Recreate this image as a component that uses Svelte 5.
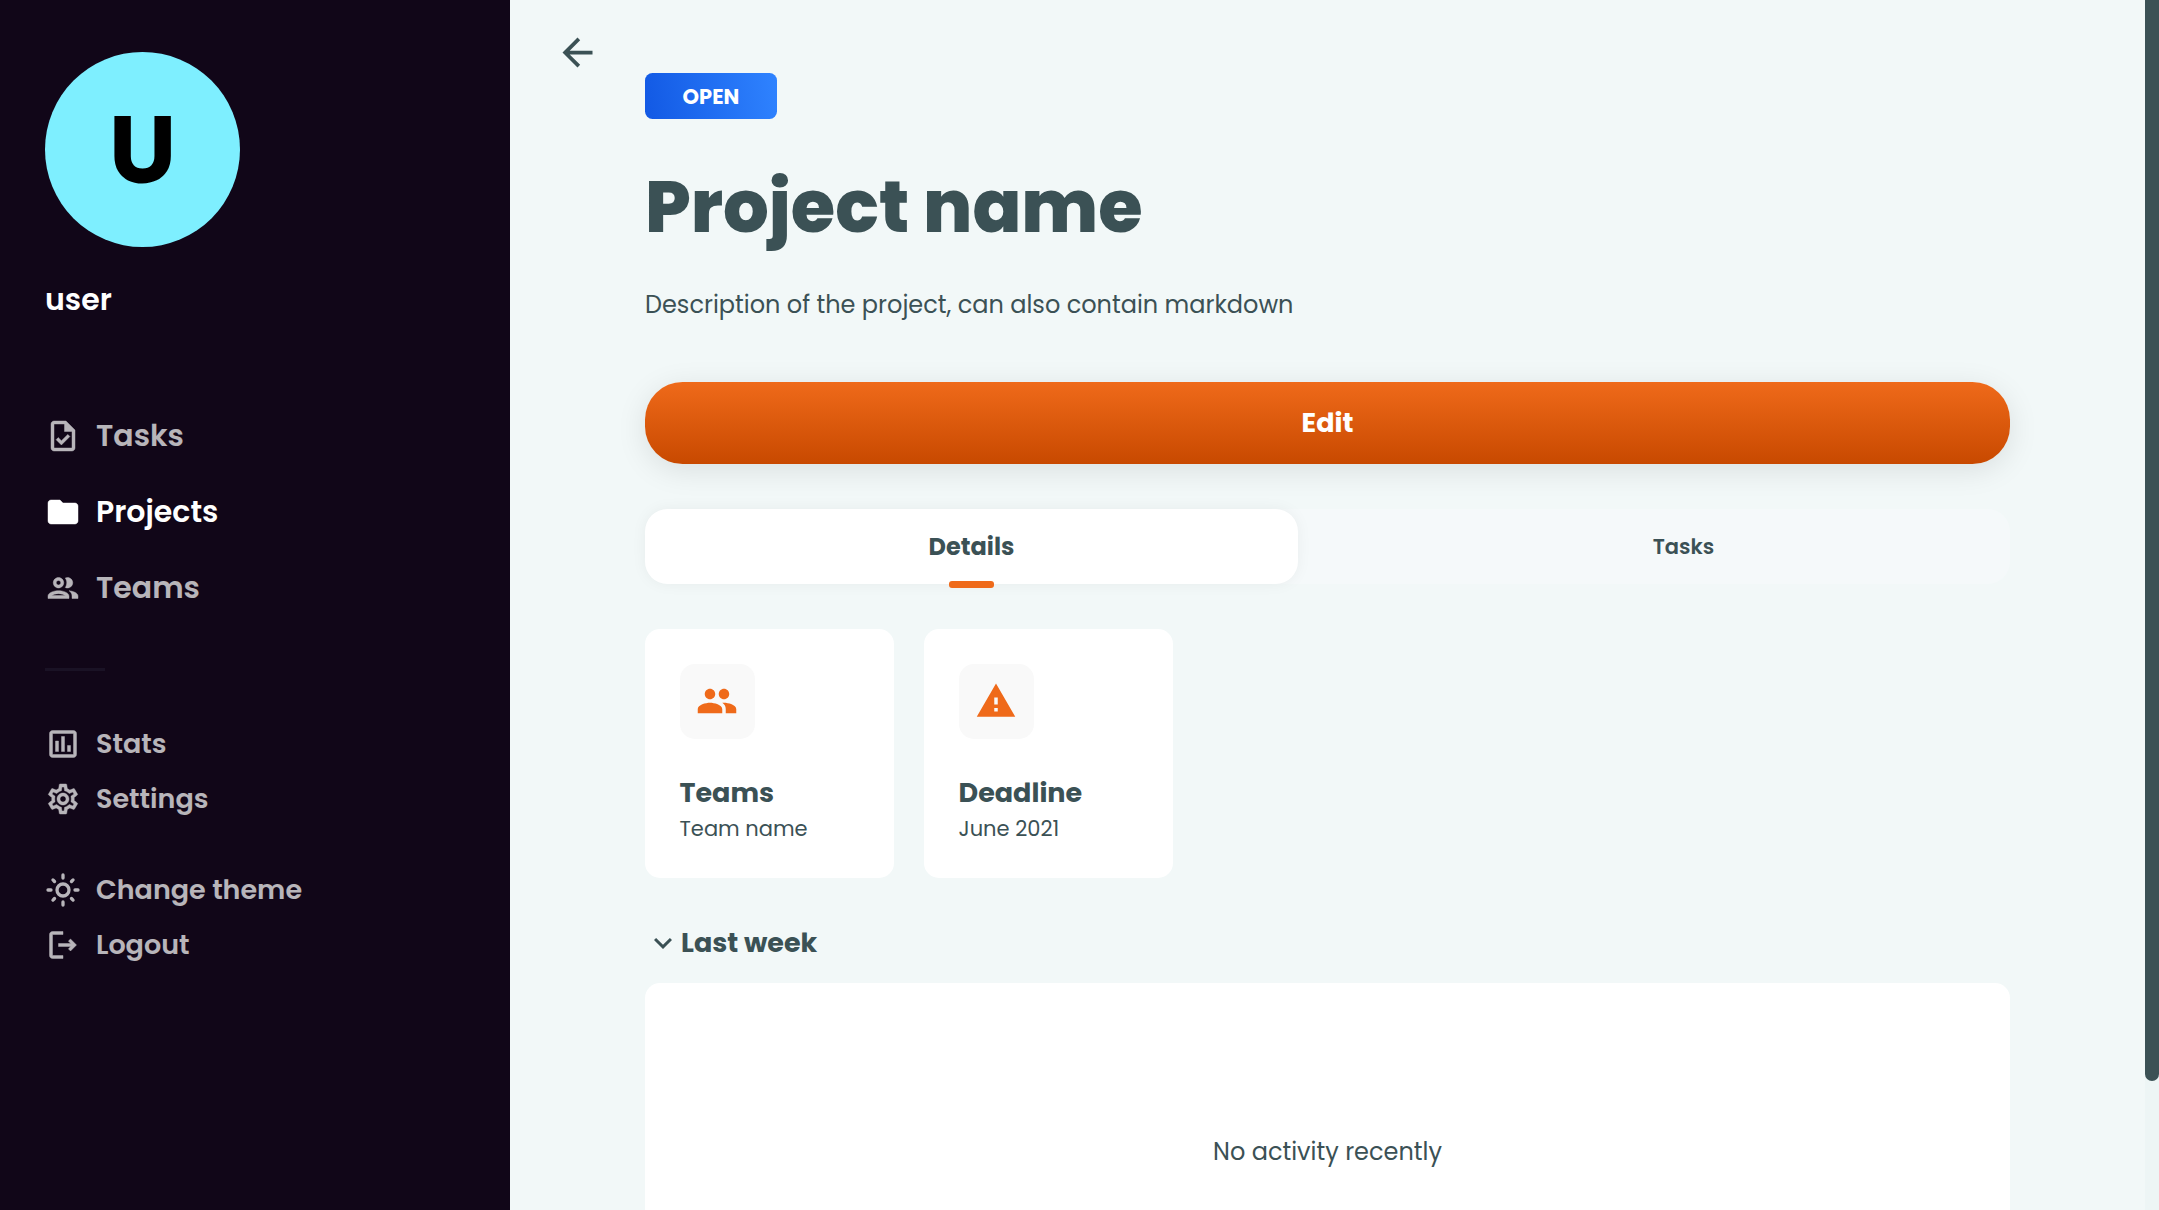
<script>
  const paths = {
    task: 'M14 2H6c-1.1 0-1.99.9-1.99 2L4 20c0 1.1.89 2 1.99 2H18c1.1 0 2-.9 2-2V8l-6-6zm4 18H6V4h7v5h5v11zm-9.18-6.95L7.4 14.46 10.94 18l5.66-5.66-1.41-1.41-4.24 4.24-2.13-2.12z',
    folder: 'M10 4H4c-1.1 0-1.99.9-1.99 2L2 18c0 1.1.9 2 2 2h16c1.1 0 2-.9 2-2V8c0-1.1-.9-2-2-2h-8l-2-2z',
    groupOutline:
      'M9 13.75c-2.34 0-7 1.17-7 3.5V19h14v-1.75c0-2.33-4.66-3.5-7-3.5zM4.34 17c.84-.58 2.87-1.25 4.66-1.25s3.82.67 4.66 1.25H4.34zM9 12c1.93 0 3.5-1.57 3.5-3.5S10.93 5 9 5 5.5 6.57 5.5 8.5 7.07 12 9 12zm0-5c.83 0 1.5.67 1.5 1.5S9.83 10 9 10s-1.5-.67-1.5-1.5S8.17 7 9 7zm7.04 6.81c1.16.84 1.96 1.96 1.96 3.44V19h4v-1.75c0-2.02-3.5-3.17-5.96-3.44zM15 12c1.93 0 3.5-1.57 3.5-3.5S16.93 5 15 5c-.54 0-1.04.13-1.5.35.63.89 1 1.98 1 3.15s-.37 2.26-1 3.15c.46.22.96.35 1.5.35z',
    stats:
      'M19 3H5c-1.1 0-2 .9-2 2v14c0 1.1.9 2 2 2h14c1.1 0 2-.9 2-2V5c0-1.1-.9-2-2-2zm0 16H5V5h14v14zM7 10h2v7H7zm4-3h2v10h-2zm4 6h2v4h-2z',
    settings:
      'M19.43 12.98c.04-.32.07-.64.07-.98s-.03-.66-.07-.98l2.11-1.65c.19-.15.24-.42.12-.64l-2-3.46c-.09-.16-.26-.25-.44-.25-.06 0-.12.01-.17.03l-2.49 1c-.52-.4-1.08-.73-1.69-.98l-.38-2.65C14.46 2.18 14.25 2 14 2h-4c-.25 0-.46.18-.49.42l-.38 2.65c-.61.25-1.17.59-1.69.98l-2.49-1c-.06-.02-.12-.03-.18-.03-.17 0-.34.09-.43.25l-2 3.46c-.13.22-.07.49.12.64l2.11 1.65c-.04.32-.07.65-.07.98s.03.66.07.98l-2.11 1.65c-.19.15-.24.42-.12.64l2 3.46c.09.16.26.25.44.25.06 0 .12-.01.17-.03l2.49-1c.52.4 1.08.73 1.69.98l.38 2.65c.03.24.24.42.49.42h4c.25 0 .46-.18.49-.42l.38-2.65c.61-.25 1.17-.59 1.69-.98l2.49 1c.06.02.12.03.18.03.17 0 .34-.09.43-.25l2-3.46c.12-.22.07-.49-.12-.64l-2.11-1.65zm-1.98-1.71c.04.31.05.52.05.73 0 .21-.02.43-.05.73l-.14 1.13.89.7 1.08.84-.7 1.21-1.27-.51-1.04-.42-.9.68c-.43.32-.84.56-1.25.73l-1.06.43-.16 1.13-.2 1.35h-1.4l-.19-1.35-.16-1.13-1.06-.43c-.43-.18-.83-.41-1.23-.71l-.91-.7-1.06.43-1.27.51-.7-1.21 1.08-.84.89-.7-.14-1.13c-.03-.31-.05-.54-.05-.74s.02-.43.05-.73l.14-1.13-.89-.7-1.08-.84.7-1.21 1.27.51 1.04.42.9-.68c.43-.32.84-.56 1.25-.73l1.06-.43.16-1.13.2-1.35h1.39l.19 1.35.16 1.13 1.06.43c.43.18.83.41 1.23.71l.91.7 1.06-.43 1.27-.51.7 1.21-1.07.85-.89.7.14 1.13zM12 8c-2.21 0-4 1.79-4 4s1.79 4 4 4 4-1.79 4-4-1.79-4-4-4zm0 6c-1.1 0-2-.9-2-2s.9-2 2-2 2 .9 2 2-.9 2-2 2z',
    logout:
      'M17 8l-1.41 1.41L17.17 11H9v2h8.17l-1.58 1.58L17 16l4-4-4-4zM5 5h7V3H5c-1.1 0-2 .9-2 2v14c0 1.1.9 2 2 2h7v-2H5V5z',
    back: 'M20 11H7.83l5.59-5.59L12 4l-8 8 8 8 1.41-1.41L7.83 13H20v-2z',
    group:
      'M16 11c1.66 0 2.99-1.34 2.99-3S17.66 5 16 5c-1.66 0-3 1.34-3 3s1.34 3 3 3zm-8 0c1.66 0 2.99-1.34 2.99-3S9.66 5 8 5C6.34 5 5 6.34 5 8s1.34 3 3 3zm0 2c-2.33 0-7 1.17-7 3.5V19h14v-2.5c0-2.33-4.67-3.5-7-3.5zm8 0c-.29 0-.62.02-.97.05 1.16.84 1.97 1.97 1.97 3.45V19h6v-2.5c0-2.33-4.67-3.5-7-3.5z',
    warning: 'M1 21h22L12 2 1 21zm12-3h-2v-2h2v2zm0-4h-2v-4h2v4z',
    chevron: 'M16.59 8.59L12 13.17 7.41 8.59 6 10l6 6 6-6z'
  };

  const pages = [
    { label: 'Tasks', icon: 'task' },
    { label: 'Projects', icon: 'folder' },
    { label: 'Teams', icon: 'groupOutline' }
  ];
  const tools = [
    { label: 'Stats', icon: 'stats' },
    { label: 'Settings', icon: 'settings' }
  ];
  const actions = [
    { label: 'Change theme', icon: 'sun' },
    { label: 'Logout', icon: 'logout' }
  ];
  const facts = [
    { title: 'Teams', value: 'Team name', icon: 'group' },
    { title: 'Deadline', value: 'June 2021', icon: 'warning' }
  ];

  let page = $state('Projects');
  let tab = $state('Details');
</script>

{#snippet icon(name)}
  <svg class="icon" viewBox="0 0 24 24" aria-hidden="true">
    {#if name === 'sun'}
      <g class="rays">
        <circle cx="12" cy="12" r="4" />
        <path d="M12 2v2M12 20v2M2 12h2M20 12h2M5.3 5.3l1.05 1.05M17.65 17.65l1.05 1.05M5.3 18.7l1.05-1.05M17.65 6.35l1.05-1.05" />
      </g>
    {:else}
      <path class="shape" d={paths[name]} />
    {/if}
  </svg>
{/snippet}

<div class="app">
  <aside class="sidebar">
    <div class="avatar">U</div>
    <div class="username">user</div>
    <nav class="pages">
      {#each pages as item}
        <button class="link big" class:active={page === item.label} onclick={() => (page = item.label)}>
          {@render icon(item.icon)}<span>{item.label}</span>
        </button>
      {/each}
    </nav>
    <div class="divider"></div>
    <div class="group">
      {#each tools as item}
        <button class="link">{@render icon(item.icon)}<span>{item.label}</span></button>
      {/each}
    </div>
    <div class="group">
      {#each actions as item}
        <button class="link">{@render icon(item.icon)}<span>{item.label}</span></button>
      {/each}
    </div>
  </aside>

  <main class="main">
    <div class="back">
      <button aria-label="Back">{@render icon('back')}</button>
    </div>
    <div class="content">
      <div class="badge">OPEN</div>
      <h1>Project name</h1>
      <p class="description">Description of the project, can also contain markdown</p>
      <button class="edit">Edit</button>
      <div class="tabs">
        {#each ['Details', 'Tasks'] as name}
          <button class="tab" class:selected={tab === name} onclick={() => (tab = name)}>{name}</button>
        {/each}
      </div>
      <div class="cards">
        {#each facts as fact}
          <section class="card">
            <div class="card-icon">{@render icon(fact.icon)}</div>
            <h2>{fact.title}</h2>
            <p>{fact.value}</p>
          </section>
        {/each}
      </div>
      <div class="section-title">{@render icon('chevron')}<h2>Last week</h2></div>
      <div class="activity">No activity recently</div>
    </div>
    <div class="scrollbar"><div class="thumb"></div></div>
  </main>
</div>

<style>
  :global(body) {
    margin: 0;
    overflow: hidden;
  }
  .app {
    display: flex;
    height: 100vh;
    overflow: hidden;
    background: #f2f8f8;
    color: #3b5155;
    font-family: Poppins, Inter, sans-serif;
  }
  button {
    display: flex;
    align-items: center;
    margin: 0;
    padding: 0;
    border: 0;
    background: none;
    color: inherit;
    font: inherit;
    cursor: pointer;
  }
  h1, h2, p {
    margin: 0;
  }
  .icon {
    display: block;
    flex: none;
    width: 36px;
    height: 36px;
  }
  .shape {
    fill: currentColor;
  }
  .rays {
    fill: none;
    stroke: currentColor;
    stroke-width: 2.2;
    stroke-linecap: round;
  }

  .sidebar {
    flex: none;
    box-sizing: border-box;
    width: 510px;
    padding: 52px 45px 0;
    background: #110618;
    color: #fff;
  }
  .avatar {
    display: flex;
    align-items: center;
    justify-content: center;
    width: 195px;
    height: 195px;
    border-radius: 50%;
    background: #7eefff;
    color: #000;
    font-size: 96px;
    font-weight: 700;
  }
  .username {
    margin-top: 30px;
    font-size: 30px;
    font-weight: 600;
    line-height: 45px;
  }
  .pages {
    margin-top: 76px;
  }
  .link {
    height: 55px;
    gap: 15px;
    font-size: 27px;
    font-weight: 600;
    opacity: 0.7;
  }
  .link .icon {
    overflow: visible;
  }
  .link .shape {
    stroke: currentColor;
    stroke-width: 0.3;
  }
  .link.big {
    height: 76px;
    font-size: 30px;
  }
  .link.active {
    opacity: 1;
  }
  .divider {
    width: 60px;
    height: 3px;
    margin: 42px 0 45.5px;
    background: #1a1225;
  }
  .group + .group {
    margin-top: 36px;
  }

  .main {
    display: flex;
    flex: 1;
    min-width: 0;
  }
  .back {
    flex: none;
    box-sizing: border-box;
    width: 135px;
    padding: 30px 0 0 45px;
  }
  .back .icon {
    width: 45px;
    height: 45px;
  }
  .content {
    flex: none;
    width: 1365px;
    padding-top: 73px;
  }
  .badge {
    box-sizing: border-box;
    width: 132px;
    height: 46px;
    padding-top: 1px;
    border-radius: 7.5px;
    background: linear-gradient(80deg, #1259e4, #2f83ff);
    color: #fff;
    font-size: 21px;
    font-weight: 700;
    line-height: 46px;
    text-align: center;
  }
  h1 {
    margin-top: 34px;
    font-size: 72px;
    font-weight: 800;
    line-height: 108px;
  }
  .description {
    margin-top: 26px;
    font-size: 24px;
    line-height: 36px;
  }
  .edit {
    justify-content: center;
    width: 100%;
    height: 82px;
    margin-top: 59px;
    border-radius: 37.5px;
    background: linear-gradient(#ef6a1a, #c84900);
    box-shadow: 0 6px 30px rgba(0, 0, 0, 0.1);
    color: #fff;
    font-size: 27px;
    font-weight: 700;
  }
  .tabs {
    display: flex;
    justify-content: space-between;
    height: 75px;
    margin-top: 45px;
    border-radius: 22.5px;
    background: #f5f9fa;
  }
  .tab {
    position: relative;
    justify-content: center;
    width: 653px;
    border-radius: 22.5px;
    font-size: 21px;
    font-weight: 600;
  }
  .tab.selected {
    background: #fff;
    box-shadow: 0 0 15px rgba(0, 0, 0, 0.05);
    font-size: 24px;
    font-weight: 700;
  }
  .tab.selected::after {
    content: '';
    position: absolute;
    bottom: -4px;
    left: calc(50% - 23px);
    width: 45px;
    height: 7.5px;
    border-radius: 3px;
    background: #ef6a1a;
  }
  .cards {
    display: flex;
    gap: 30px;
    margin-top: 45px;
  }
  .card {
    box-sizing: border-box;
    width: 249px;
    height: 249px;
    padding: 35px 34.5px;
    border-radius: 15px;
    background: #fff;
  }
  .card-icon {
    display: flex;
    align-items: center;
    justify-content: center;
    box-sizing: border-box;
    width: 75px;
    height: 75px;
    padding-bottom: 1.5px;
    border-radius: 15px;
    background: #f9f9f9;
    color: #ef6a1a;
  }
  .card-icon .icon {
    width: 42px;
    height: 42px;
  }
  h2 {
    font-size: 27px;
    font-weight: 700;
    line-height: 40px;
  }
  .card h2 {
    margin-top: 33.5px;
  }
  .card p {
    font-size: 21px;
    line-height: 32px;
  }
  .section-title {
    display: flex;
    align-items: center;
    margin-top: 44.5px;
  }
  .activity {
    display: flex;
    align-items: center;
    justify-content: center;
    height: 337px;
    margin-top: 20.5px;
    border-radius: 15px;
    background: #fff;
    font-size: 24px;
  }
  .scrollbar {
    flex: none;
    width: 14px;
    height: 100%;
    margin-left: auto;
    background: #edf5f5;
  }
  .thumb {
    height: 1081px;
    border-radius: 0 0 7px 7px;
    background: #3b5155;
  }
</style>
